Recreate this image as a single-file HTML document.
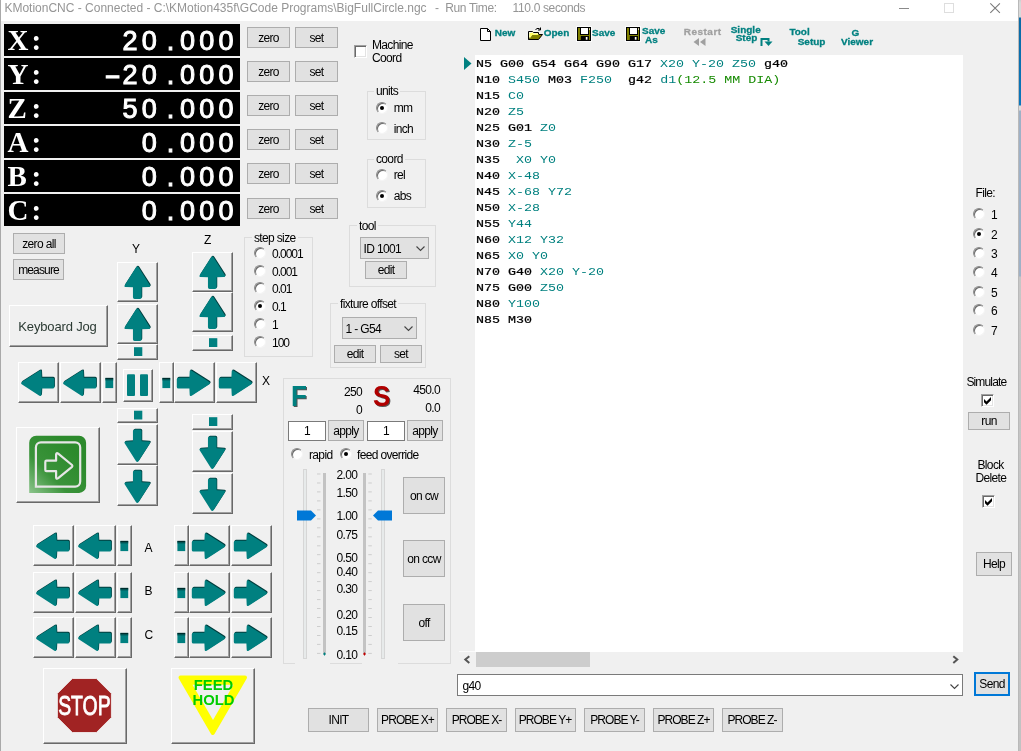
<!DOCTYPE html><html><head><meta charset="utf-8"><title>KMotionCNC</title><style>
html,body{margin:0;padding:0}
body{width:1021px;height:751px;overflow:hidden;position:relative;background:#f0f0f0;font-family:"Liberation Sans",sans-serif;font-size:12px;color:#000;letter-spacing:-0.65px}
div,span,pre{position:absolute;box-sizing:border-box;white-space:nowrap}
#ui{left:0;top:0;width:1021px;height:751px;will-change:transform}
#strip{left:1019px;top:0;width:2px;height:751px;background:linear-gradient(#cfcfcf 0,#d9d9d9 3px,#d9d9d9 17px,#0a6aa5 18px,#0b76bb 105px,#dcdcdc 106px,#dcdcdc 110px,#9fb1c6 111px,#9fb1c6 276px,#c6c6c6 277px,#c2c2c2 751px)}
#edge{left:1018px;top:0;width:1px;height:751px;background:#b9b9b9}
#ledge{left:0;top:0;width:1px;height:751px;background:#a9a9a9}
#title{left:1px;top:0;width:1017px;height:21px;background:#fff}
.tt{top:0;height:21px;line-height:17px;font-size:12px;color:#959595;letter-spacing:0}
.dro{left:4px;width:236px;height:32px;background:#000;color:#fff;letter-spacing:0}
.dro .l{left:3.5px;top:0;height:32px;line-height:33px;font-family:"Liberation Serif",serif;font-weight:bold;font-size:29px}
.dro .l b,.dro .v b{position:static;display:inline-block;width:19.2px;text-align:center;font-weight:inherit;letter-spacing:0}
.dro .v{right:2.3px;top:0;height:32px;line-height:35px;font-family:"Liberation Sans",sans-serif;font-weight:normal;-webkit-text-stroke:1px #fff;font-size:27px;letter-spacing:4.19px;transform:none}
.dro .v u{position:static;display:inline-block;text-decoration:none;transform:scaleX(1.08)}
.btn{background:#e1e1e1;border:1px solid #adadad;text-align:center;line-height:21px;height:21px}
.b3{background:#f0f0f0;border:1px solid;border-color:#fff #696969 #696969 #fff;box-shadow:inset -1px -1px 0 #a0a0a0}
.b3 svg{position:absolute;left:-1px;top:-1px}
.grp{border:1px solid #dcdcdc}
.gl{background:#f0f0f0;padding:0 2px;line-height:14px;height:14px}
.rd{width:12px;height:12px;border-radius:50%;background:#fff;border:1px solid;border-color:#8a8a8a #f4f4f4 #f4f4f4 #8a8a8a;box-shadow:inset 1px 1px 0 #6a6a6a;transform:rotate(0deg)}
.rd.on:after{content:"";position:absolute;left:3px;top:3px;width:4px;height:4px;border-radius:50%;background:#000}
.cb{width:13px;height:13px;background:#fff;border:1px solid;border-color:#a0a0a0 #fff #fff #a0a0a0;box-shadow:inset 1px 1px 0 #696969,inset -1px -1px 0 #e3e3e3}
.lb{line-height:14px;height:14px}
.combo{background:#e1e1e1;border:1px solid #adadad;padding-left:2.5px}
.edit{background:#fff;border:1px solid #7a7a7a;text-align:center;line-height:18px}
#ed{left:475px;top:55px;width:488px;height:597px;background:#fff}
#code{left:1px;top:0;margin:0;font-family:"Liberation Mono",monospace;font-size:11.5px;line-height:16px;letter-spacing:0;transform:scaleX(1.1594);transform-origin:0 0;white-space:pre;padding-top:1px}
#code b{font-weight:normal;color:#000;-webkit-text-stroke:0.22px #000}
#code i{font-style:normal;color:#00807f}
#code u{text-decoration:none;color:#158a00}
.tb{font-weight:bold;font-size:10px;color:#008080;line-height:10px;letter-spacing:0;transform:scaleY(.94);transform-origin:0 85%;-webkit-text-stroke:0.3px}
svg{position:absolute;overflow:visible}
</style></head><body><div id="ui">
<div id="title"></div><div id="ledge"></div><div id="edge"></div><div id="strip"></div>
<svg width="1021" height="21" style="left:0;top:0"><path d="M899 8.5h10" stroke="#8a8a8a" stroke-width="1" fill="none"/><rect x="944.5" y="3.5" width="9" height="9" fill="none" stroke="#dedede"/><path d="M990.3 3.3l9.6 9.6M999.9 3.3l-9.6 9.6" stroke="#7a7a7a" stroke-width="1.1" fill="none"/></svg>
<div class="dro" style="top:24px"><span class="l"><b>X</b><b>:</b></span><span class="v">20<b>.</b>000</span></div>
<div class="btn" style="left:247px;top:27px;width:43px">zero</div><div class="btn" style="left:295px;top:27px;width:43px">set</div>
<div class="dro" style="top:58px"><span class="l"><b>Y</b><b>:</b></span><span class="v"><b style="transform:scaleX(1.8)">-</b>20<b>.</b>000</span></div>
<div class="btn" style="left:247px;top:61px;width:43px">zero</div><div class="btn" style="left:295px;top:61px;width:43px">set</div>
<div class="dro" style="top:92px"><span class="l"><b>Z</b><b>:</b></span><span class="v">50<b>.</b>000</span></div>
<div class="btn" style="left:247px;top:95px;width:43px">zero</div><div class="btn" style="left:295px;top:95px;width:43px">set</div>
<div class="dro" style="top:126px"><span class="l"><b>A</b><b>:</b></span><span class="v">0<b>.</b>000</span></div>
<div class="btn" style="left:247px;top:129px;width:43px">zero</div><div class="btn" style="left:295px;top:129px;width:43px">set</div>
<div class="dro" style="top:160px"><span class="l"><b>B</b><b>:</b></span><span class="v">0<b>.</b>000</span></div>
<div class="btn" style="left:247px;top:163px;width:43px">zero</div><div class="btn" style="left:295px;top:163px;width:43px">set</div>
<div class="dro" style="top:194px"><span class="l"><b>C</b><b>:</b></span><span class="v">0<b>.</b>000</span></div>
<div class="btn" style="left:247px;top:198px;width:43px">zero</div><div class="btn" style="left:295px;top:198px;width:43px">set</div>
<div class="btn" style="left:13px;top:233px;width:52px;height:21px;line-height:21px;">zero all</div>
<div class="btn" style="left:13px;top:259px;width:51px;height:21px;line-height:21px;letter-spacing:-0.85px">measure</div>
<div class="cb" style="left:354px;top:45px"></div>
<span class="lb" style="left:372px;top:37.7px;">Machine</span>
<span class="lb" style="left:372px;top:50.7px;">Coord</span>
<div class="grp" style="left:367px;top:91px;width:59px;height:49px"></div>
<span class="gl" style="left:374px;top:83.5px">units</span>
<div class="rd on" style="left:375.7px;top:101.5px"></div>
<span class="lb" style="left:393.7px;top:101.2px;">mm</span>
<div class="rd" style="left:375.7px;top:122px"></div>
<span class="lb" style="left:393.7px;top:121.7px;">inch</span>
<div class="grp" style="left:367px;top:159px;width:59px;height:49px"></div>
<span class="gl" style="left:374px;top:151.5px">coord</span>
<div class="rd" style="left:375.7px;top:168.5px"></div>
<span class="lb" style="left:393.7px;top:168.2px;">rel</span>
<div class="rd on" style="left:375.7px;top:189.5px"></div>
<span class="lb" style="left:393.7px;top:189.2px;">abs</span>
<div class="grp" style="left:244px;top:237px;width:69px;height:120px"></div>
<span class="gl" style="left:252px;top:230.5px">step size</span>
<div class="rd" style="left:254px;top:247px"></div>
<span class="lb" style="left:272px;top:247.2px;letter-spacing:-1px">0.0001</span>
<div class="rd" style="left:254px;top:265px"></div>
<span class="lb" style="left:272px;top:265.2px;letter-spacing:-1px">0.001</span>
<div class="rd" style="left:254px;top:282px"></div>
<span class="lb" style="left:272px;top:282.2px;letter-spacing:-1px">0.01</span>
<div class="rd on" style="left:254px;top:300px"></div>
<span class="lb" style="left:272px;top:300.2px;letter-spacing:-1px">0.1</span>
<div class="rd" style="left:254px;top:318px"></div>
<span class="lb" style="left:272px;top:318.2px;letter-spacing:-1px">1</span>
<div class="rd" style="left:254px;top:336px"></div>
<span class="lb" style="left:272px;top:336.2px;letter-spacing:-1px">100</span>
<div class="grp" style="left:349px;top:225px;width:87px;height:62px"></div>
<span class="gl" style="left:357px;top:218.5px">tool</span>
<div class="combo" style="left:360px;top:237px;width:69px;height:22px;line-height:22px">ID 1001</div>
<svg width="10" height="6" style="left:416px;top:246px"><path d="M0.5 0.5l4 4l4-4" fill="none" stroke="#444" stroke-width="1.1"/></svg>
<div class="btn" style="left:365px;top:261px;width:42px;height:18px;line-height:16.8px;">edit</div>
<div class="grp" style="left:330px;top:303px;width:96px;height:65px"></div>
<span class="gl" style="left:338px;top:296.5px">fixture offset</span>
<div class="combo" style="left:342px;top:317px;width:75px;height:22px;line-height:22px">1 - G54</div>
<svg width="10" height="6" style="left:404px;top:326px"><path d="M0.5 0.5l4 4l4-4" fill="none" stroke="#444" stroke-width="1.1"/></svg>
<div class="btn" style="left:334px;top:345px;width:42px;height:18px;line-height:16.8px;">edit</div>
<div class="btn" style="left:380px;top:345px;width:42px;height:18px;line-height:16.8px;">set</div>
<svg width="0" height="0" style="left:0;top:0"><defs>
<linearGradient id="tg" x1="0" y1="0" x2="0" y2="1"><stop offset="0" stop-color="#009090"/><stop offset="0.4" stop-color="#008080"/><stop offset="1" stop-color="#007878"/></linearGradient>
<path id="arr" d="M0 -16.2 Q0.8 -16.2 1.4 -15.2 L12.5 2.2 Q13.5 4.2 11.6 4.2 L4.35 4.5 L4.35 14.6 Q4.35 16.2 2.7499999999999996 16.2 L-2.7499999999999996 16.2 Q-4.35 16.2 -4.35 14.6 L-4.35 4.5 L-11.6 4.2 Q-13.5 4.2 -12.5 2.2 L-1.4 -15.2 Q-0.8 -16.2 0 -16.2Z"/>
<path id="arh" d="M0 -16.6 Q0.8 -16.6 1.4 -15.600000000000001 L12.5 1.7000000000000002 Q13.5 3.7 11.6 3.7 L5.45 4.0 L5.45 15.000000000000002 Q5.45 16.6 3.85 16.6 L-3.85 16.6 Q-5.45 16.6 -5.45 15.000000000000002 L-5.45 4.0 L-11.6 3.7 Q-13.5 3.7 -12.5 1.7000000000000002 L-1.4 -15.600000000000001 Q-0.8 -16.6 0 -16.6Z"/>
</defs></svg>
<div class="b3" style="left:117px;top:262px;width:41px;height:40px"><svg width="41" height="40"><g transform="translate(20.9,19.849999999999998) rotate(0)"><use href="#arr" fill="#003e3e"/></g><g transform="translate(20.3,20.75) rotate(0)"><use href="#arr" fill="#008080"/></g></svg></div>
<div class="b3" style="left:117px;top:304px;width:41px;height:40px"><svg width="41" height="40"><g transform="translate(20.9,19.849999999999998) rotate(0)"><use href="#arr" fill="#003e3e"/></g><g transform="translate(20.3,20.75) rotate(0)"><use href="#arr" fill="#008080"/></g></svg></div>
<div class="b3" style="left:117px;top:344px;width:41px;height:16px"><svg width="41" height="16"><rect x="17.0" y="3.2" width="8.3" height="8.8" fill="#008080"/></svg></div>
<div class="b3" style="left:117px;top:408px;width:41px;height:15px"><svg width="41" height="15"><rect x="17.0" y="2.7" width="8.3" height="8.8" fill="#008080"/></svg></div>
<div class="b3" style="left:117px;top:424px;width:41px;height:41px"><svg width="41" height="41"><g transform="translate(20.9,20.849999999999998) rotate(180)"><use href="#arr" fill="#003e3e"/></g><g transform="translate(20.3,21.75) rotate(180)"><use href="#arr" fill="#008080"/></g></svg></div>
<div class="b3" style="left:117px;top:465px;width:41px;height:41px"><svg width="41" height="41"><g transform="translate(20.9,20.849999999999998) rotate(180)"><use href="#arr" fill="#003e3e"/></g><g transform="translate(20.3,21.75) rotate(180)"><use href="#arr" fill="#008080"/></g></svg></div>
<div class="b3" style="left:192px;top:252px;width:41px;height:40px"><svg width="41" height="40"><g transform="translate(20.9,19.849999999999998) rotate(0)"><use href="#arr" fill="#003e3e"/></g><g transform="translate(20.3,20.75) rotate(0)"><use href="#arr" fill="#008080"/></g></svg></div>
<div class="b3" style="left:192px;top:292px;width:41px;height:40px"><svg width="41" height="40"><g transform="translate(20.9,19.849999999999998) rotate(0)"><use href="#arr" fill="#003e3e"/></g><g transform="translate(20.3,20.75) rotate(0)"><use href="#arr" fill="#008080"/></g></svg></div>
<div class="b3" style="left:192px;top:335px;width:41px;height:16px"><svg width="41" height="16"><rect x="17.0" y="3.2" width="8.3" height="8.8" fill="#008080"/></svg></div>
<div class="b3" style="left:192px;top:414px;width:41px;height:16px"><svg width="41" height="16"><rect x="17.0" y="3.2" width="8.3" height="8.8" fill="#008080"/></svg></div>
<div class="b3" style="left:192px;top:431px;width:41px;height:41px"><svg width="41" height="41"><g transform="translate(20.9,20.849999999999998) rotate(180)"><use href="#arr" fill="#003e3e"/></g><g transform="translate(20.3,21.75) rotate(180)"><use href="#arr" fill="#008080"/></g></svg></div>
<div class="b3" style="left:192px;top:473px;width:41px;height:41px"><svg width="41" height="41"><g transform="translate(20.9,20.849999999999998) rotate(180)"><use href="#arr" fill="#003e3e"/></g><g transform="translate(20.3,21.75) rotate(180)"><use href="#arr" fill="#008080"/></g></svg></div>
<div class="b3" style="left:18px;top:362px;width:41px;height:41px"><svg width="41" height="41"><g transform="translate(20.299999999999997,20.25) rotate(270)"><use href="#arh" fill="#003e3e"/></g><g transform="translate(19.7,21.150000000000002) rotate(270)"><use href="#arh" fill="#008080"/></g></svg></div>
<div class="b3" style="left:60px;top:362px;width:41px;height:41px"><svg width="41" height="41"><g transform="translate(20.299999999999997,20.25) rotate(270)"><use href="#arh" fill="#003e3e"/></g><g transform="translate(19.7,21.150000000000002) rotate(270)"><use href="#arh" fill="#008080"/></g></svg></div>
<div class="b3" style="left:102px;top:362px;width:15px;height:41px"><svg width="15" height="41"><rect x="3.4" y="15.9" width="7.8" height="10.2" fill="#008080"/><rect x="3.4" y="15.9" width="7.8" height="1.2" fill="#002c2c"/><rect x="3.4" y="17.1" width="7.8" height="1.3" fill="#005050"/></svg></div>
<div class="b3" style="left:159px;top:362px;width:15px;height:41px"><svg width="15" height="41"><rect x="3.4" y="15.9" width="7.8" height="10.2" fill="#008080"/><rect x="3.4" y="15.9" width="7.8" height="1.2" fill="#002c2c"/><rect x="3.4" y="17.1" width="7.8" height="1.3" fill="#005050"/></svg></div>
<div class="b3" style="left:174px;top:362px;width:41px;height:41px"><svg width="41" height="41"><g transform="translate(20.0,20.25) rotate(90)"><use href="#arh" fill="#003e3e"/></g><g transform="translate(19.400000000000002,21.150000000000002) rotate(90)"><use href="#arh" fill="#008080"/></g></svg></div>
<div class="b3" style="left:216px;top:362px;width:41px;height:41px"><svg width="41" height="41"><g transform="translate(20.0,20.25) rotate(90)"><use href="#arh" fill="#003e3e"/></g><g transform="translate(19.400000000000002,21.150000000000002) rotate(90)"><use href="#arh" fill="#008080"/></g></svg></div>
<div class="b3" style="left:123px;top:369px;width:30px;height:33px"><svg width="30" height="33"><rect x="4" y="5.300" width="8" height="21.600" rx="1" fill="#008080"/><rect x="17" y="5.300" width="8" height="21.600" rx="1" fill="#008080"/></svg></div>
<span class="lb" style="left:262px;top:374.0px;">X</span>
<span class="lb" style="left:132px;top:242px">Y</span><span class="lb" style="left:204px;top:233px">Z</span>
<div class="b3" style="left:33px;top:525px;width:41px;height:41px"><svg width="41" height="41"><g transform="translate(20.299999999999997,20.25) rotate(270)"><use href="#arh" fill="#003e3e"/></g><g transform="translate(19.7,21.150000000000002) rotate(270)"><use href="#arh" fill="#008080"/></g></svg></div>
<div class="b3" style="left:75px;top:525px;width:41px;height:41px"><svg width="41" height="41"><g transform="translate(20.299999999999997,20.25) rotate(270)"><use href="#arh" fill="#003e3e"/></g><g transform="translate(19.7,21.150000000000002) rotate(270)"><use href="#arh" fill="#008080"/></g></svg></div>
<div class="b3" style="left:117px;top:525px;width:15px;height:41px"><svg width="15" height="41"><rect x="3.4" y="15.9" width="7.8" height="10.2" fill="#008080"/><rect x="3.4" y="15.9" width="7.8" height="1.2" fill="#002c2c"/><rect x="3.4" y="17.1" width="7.8" height="1.3" fill="#005050"/></svg></div>
<div class="b3" style="left:174px;top:525px;width:15px;height:41px"><svg width="15" height="41"><rect x="3.4" y="15.9" width="7.8" height="10.2" fill="#008080"/><rect x="3.4" y="15.9" width="7.8" height="1.2" fill="#002c2c"/><rect x="3.4" y="17.1" width="7.8" height="1.3" fill="#005050"/></svg></div>
<div class="b3" style="left:189px;top:525px;width:41px;height:41px"><svg width="41" height="41"><g transform="translate(20.0,20.25) rotate(90)"><use href="#arh" fill="#003e3e"/></g><g transform="translate(19.400000000000002,21.150000000000002) rotate(90)"><use href="#arh" fill="#008080"/></g></svg></div>
<div class="b3" style="left:231px;top:525px;width:41px;height:41px"><svg width="41" height="41"><g transform="translate(20.0,20.25) rotate(90)"><use href="#arh" fill="#003e3e"/></g><g transform="translate(19.400000000000002,21.150000000000002) rotate(90)"><use href="#arh" fill="#008080"/></g></svg></div>
<span class="lb" style="left:144.5px;top:541px">A</span>
<div class="b3" style="left:33px;top:572px;width:41px;height:41px"><svg width="41" height="41"><g transform="translate(20.299999999999997,20.25) rotate(270)"><use href="#arh" fill="#003e3e"/></g><g transform="translate(19.7,21.150000000000002) rotate(270)"><use href="#arh" fill="#008080"/></g></svg></div>
<div class="b3" style="left:75px;top:572px;width:41px;height:41px"><svg width="41" height="41"><g transform="translate(20.299999999999997,20.25) rotate(270)"><use href="#arh" fill="#003e3e"/></g><g transform="translate(19.7,21.150000000000002) rotate(270)"><use href="#arh" fill="#008080"/></g></svg></div>
<div class="b3" style="left:117px;top:572px;width:15px;height:41px"><svg width="15" height="41"><rect x="3.4" y="15.9" width="7.8" height="10.2" fill="#008080"/><rect x="3.4" y="15.9" width="7.8" height="1.2" fill="#002c2c"/><rect x="3.4" y="17.1" width="7.8" height="1.3" fill="#005050"/></svg></div>
<div class="b3" style="left:174px;top:572px;width:15px;height:41px"><svg width="15" height="41"><rect x="3.4" y="15.9" width="7.8" height="10.2" fill="#008080"/><rect x="3.4" y="15.9" width="7.8" height="1.2" fill="#002c2c"/><rect x="3.4" y="17.1" width="7.8" height="1.3" fill="#005050"/></svg></div>
<div class="b3" style="left:189px;top:572px;width:41px;height:41px"><svg width="41" height="41"><g transform="translate(20.0,20.25) rotate(90)"><use href="#arh" fill="#003e3e"/></g><g transform="translate(19.400000000000002,21.150000000000002) rotate(90)"><use href="#arh" fill="#008080"/></g></svg></div>
<div class="b3" style="left:231px;top:572px;width:41px;height:41px"><svg width="41" height="41"><g transform="translate(20.0,20.25) rotate(90)"><use href="#arh" fill="#003e3e"/></g><g transform="translate(19.400000000000002,21.150000000000002) rotate(90)"><use href="#arh" fill="#008080"/></g></svg></div>
<span class="lb" style="left:144.5px;top:584px">B</span>
<div class="b3" style="left:33px;top:617px;width:41px;height:41px"><svg width="41" height="41"><g transform="translate(20.299999999999997,20.25) rotate(270)"><use href="#arh" fill="#003e3e"/></g><g transform="translate(19.7,21.150000000000002) rotate(270)"><use href="#arh" fill="#008080"/></g></svg></div>
<div class="b3" style="left:75px;top:617px;width:41px;height:41px"><svg width="41" height="41"><g transform="translate(20.299999999999997,20.25) rotate(270)"><use href="#arh" fill="#003e3e"/></g><g transform="translate(19.7,21.150000000000002) rotate(270)"><use href="#arh" fill="#008080"/></g></svg></div>
<div class="b3" style="left:117px;top:617px;width:15px;height:41px"><svg width="15" height="41"><rect x="3.4" y="15.9" width="7.8" height="10.2" fill="#008080"/><rect x="3.4" y="15.9" width="7.8" height="1.2" fill="#002c2c"/><rect x="3.4" y="17.1" width="7.8" height="1.3" fill="#005050"/></svg></div>
<div class="b3" style="left:174px;top:617px;width:15px;height:41px"><svg width="15" height="41"><rect x="3.4" y="15.9" width="7.8" height="10.2" fill="#008080"/><rect x="3.4" y="15.9" width="7.8" height="1.2" fill="#002c2c"/><rect x="3.4" y="17.1" width="7.8" height="1.3" fill="#005050"/></svg></div>
<div class="b3" style="left:189px;top:617px;width:41px;height:41px"><svg width="41" height="41"><g transform="translate(20.0,20.25) rotate(90)"><use href="#arh" fill="#003e3e"/></g><g transform="translate(19.400000000000002,21.150000000000002) rotate(90)"><use href="#arh" fill="#008080"/></g></svg></div>
<div class="b3" style="left:231px;top:617px;width:41px;height:41px"><svg width="41" height="41"><g transform="translate(20.0,20.25) rotate(90)"><use href="#arh" fill="#003e3e"/></g><g transform="translate(19.400000000000002,21.150000000000002) rotate(90)"><use href="#arh" fill="#008080"/></g></svg></div>
<span class="lb" style="left:144.5px;top:628px">C</span>
<div class="b3" style="left:9px;top:305px;width:99px;height:42px"><span style="left:-1px;top:0;width:97px;height:40px;line-height:41px;text-align:center;font-size:13px;letter-spacing:-0.15px;color:#2b3a33">Keyboard Jog</span></div>
<div class="b3" style="left:16px;top:427px;width:84px;height:76px"><svg width="84" height="76"><defs><linearGradient id="gg" x1="0" y1="1" x2="0.75" y2="0.25"><stop offset="0" stop-color="#8cc48c"/><stop offset="0.45" stop-color="#3a933a"/><stop offset="1" stop-color="#2c8a2c"/></linearGradient></defs>
<path d="M20.200 8.700h42.900a7 7 0 0 1 7 7v43.200a7 7 0 0 1 -7 7h-49.900v-50.200a7 7 0 0 1 7-7z" fill="url(#gg)"/>
<path d="M24.900 15.400H59.200a5 5 0 0 1 5 5V54.600a5 5 0 0 1 -5 5H19.900V20.400a5 5 0 0 1 5-5z" fill="none" stroke="#e6e6e6" stroke-width="2.200"/>
<path d="M30.500 33.700H40.100V27.500Q40.300 25.300 42.200 26.600L56 38Q56.800 38.900 56 39.800L42.200 51.200Q40.300 52.500 40.100 50.300V44.100H30.500Q29.300 44.100 29.300 42.900V34.900Q29.300 33.700 30.500 33.700Z" fill="none" stroke="#e6e6e6" stroke-width="2.200" stroke-linejoin="round"/></svg></div>
<div class="b3" style="left:43px;top:668px;width:84px;height:76px"><svg width="84" height="76"><polygon points="29.400,10.500 53.400,10.500 68.400,25.500 68.400,49.500 53.400,64.500 29.400,64.500 14.400,49.500 14.400,25.500" fill="#a12323" stroke="#f6f6f6" stroke-width="0.800"/>
<text x="41.400" y="46.900" text-anchor="middle" font-family="Liberation Sans,sans-serif" font-weight="normal" font-size="28.500" fill="#fff" stroke="#fff" stroke-width="0.9" letter-spacing="0" transform="translate(41.400 0) scale(0.680 1) translate(-41.400 0)">STOP</text></svg></div>
<div class="b3" style="left:171px;top:668px;width:84px;height:76px"><svg width="84" height="76"><path d="M9.500 9.500h64.500l-32.250 55.500z" fill="#ffff00" stroke="#ffff00" stroke-width="4" stroke-linejoin="round"/><path d="M21.500 16.700h41l-20.500 35.300z" fill="#f0f0f0"/>
<text x="42.500" y="21.800" text-anchor="middle" font-family="Liberation Sans,sans-serif" font-weight="bold" font-size="14.800" fill="#00cc00" letter-spacing="0">FEED</text><text x="42.500" y="36.800" text-anchor="middle" font-family="Liberation Sans,sans-serif" font-weight="bold" font-size="14.800" fill="#00cc00" letter-spacing="0">HOLD</text></svg></div>
<div class="grp" style="left:283px;top:378px;width:168px;height:286px"></div>
<span style="left:291px;top:380px;font-size:29px;font-weight:bold;line-height:32px;color:#008080;letter-spacing:0;text-shadow:1px 1px 0 #555;transform:scaleX(.9);transform-origin:0 0">F</span>
<span style="left:373px;top:380px;font-size:29px;font-weight:bold;line-height:32px;color:#b00000;letter-spacing:0;text-shadow:1px 1px 0 #555;transform:scaleX(.9);transform-origin:0 0">S</span>
<span class="lb" style="right:659px;top:385px">250</span><span class="lb" style="right:659px;top:403px">0</span>
<span class="lb" style="right:581px;top:383px">450.0</span><span class="lb" style="right:581px;top:401px">0.0</span>
<div class="edit" style="left:288px;top:421px;width:38px;height:20px">1</div>
<div class="btn" style="left:328px;top:420px;width:36px;height:21px;line-height:21px;">apply</div>
<div class="edit" style="left:367px;top:421px;width:38px;height:20px">1</div>
<div class="btn" style="left:407px;top:420px;width:36px;height:21px;line-height:21px;">apply</div>
<div class="rd" style="left:291px;top:448px"></div>
<span class="lb" style="left:309px;top:447.7px;">rapid</span>
<div class="rd on" style="left:340px;top:448px"></div>
<span class="lb" style="left:357px;top:447.7px;">feed override</span>
<div style="left:295px;top:466px;width:35px;height:199px;background:#f0f0f0"></div><div style="left:362px;top:466px;width:36px;height:199px;background:#f0f0f0"></div>
<div style="left:303px;top:469px;width:4px;height:190px;background:#e7eaea;border:1px solid #d6d6d6"></div>
<div style="left:381px;top:469px;width:4px;height:190px;background:#e7eaea;border:1px solid #d6d6d6"></div>
<div style="left:323px;top:473px;width:2.500px;height:181px;background:#c3c3c3"></div><div style="left:363px;top:473px;width:2.500px;height:181px;background:#c3c3c3"></div>
<svg width="1021" height="751" style="left:0;top:0" stroke="#cdcdcd" stroke-width="1" fill="none"><path d="M317 474.0h3.500M368.300 474.0h3.500"/><path d="M317 483.0h3.500M368.300 483.0h3.500"/><path d="M317 491.9h3.500M368.300 491.9h3.500"/><path d="M317 500.9h3.500M368.300 500.9h3.500"/><path d="M317 509.9h3.500M368.300 509.9h3.500"/><path d="M317 518.9h3.500M368.300 518.9h3.500"/><path d="M317 527.8h3.500M368.300 527.8h3.500"/><path d="M317 536.8h3.500M368.300 536.8h3.500"/><path d="M317 545.8h3.500M368.300 545.8h3.500"/><path d="M317 554.7h3.500M368.300 554.7h3.500"/><path d="M317 563.7h3.500M368.300 563.7h3.500"/><path d="M317 572.7h3.500M368.300 572.7h3.500"/><path d="M317 581.6h3.500M368.300 581.6h3.500"/><path d="M317 590.6h3.500M368.300 590.6h3.500"/><path d="M317 599.6h3.500M368.300 599.6h3.500"/><path d="M317 608.5h3.500M368.300 608.5h3.500"/><path d="M317 617.5h3.500M368.300 617.5h3.500"/><path d="M317 626.5h3.500M368.300 626.5h3.500"/><path d="M317 635.5h3.500M368.300 635.5h3.500"/><path d="M317 644.4h3.500M368.300 644.4h3.500"/><path d="M317 653.4h3.500M368.300 653.4h3.500"/><path d="M323 654h3M324.500 652.500v3" stroke="#008080"/><path d="M363 654h3M364.500 652.500v3" stroke="#c00000"/></svg>
<span class="lb" style="left:336.500px;top:467.5px">2.00</span>
<span class="lb" style="left:336.500px;top:486.0px">1.50</span>
<span class="lb" style="left:336.500px;top:509.0px">1.00</span>
<span class="lb" style="left:336.500px;top:527.6px">0.75</span>
<span class="lb" style="left:336.500px;top:550.5px">0.50</span>
<span class="lb" style="left:336.500px;top:564.8px">0.40</span>
<span class="lb" style="left:336.500px;top:582.4px">0.30</span>
<span class="lb" style="left:336.500px;top:607.6px">0.20</span>
<span class="lb" style="left:336.500px;top:623.5px">0.15</span>
<span class="lb" style="left:336.500px;top:648.0px">0.10</span>
<svg width="1021" height="751" style="left:0;top:0"><path d="M297 510.500h14l5 5l-5 5h-14z" fill="#0078d7"/><path d="M392 510.500h-14l-5 5l5 5h14z" fill="#0078d7"/></svg>
<div class="btn" style="left:403px;top:477px;width:42px;height:37px;line-height:37px;">on cw</div>
<div class="btn" style="left:403px;top:540px;width:42px;height:37px;line-height:37px;">on ccw</div>
<div class="btn" style="left:403px;top:604px;width:42px;height:37px;line-height:37px;">off</div>
<div class="btn" style="left:308px;top:708px;width:61px;height:24px;line-height:22px;">INIT</div>
<div class="btn" style="left:377px;top:708px;width:61px;height:24px;line-height:22px;letter-spacing:-0.95px">PROBE X+</div>
<div class="btn" style="left:446px;top:708px;width:61px;height:24px;line-height:22px;letter-spacing:-0.95px">PROBE X-</div>
<div class="btn" style="left:514.5px;top:708px;width:61px;height:24px;line-height:22px;letter-spacing:-0.95px">PROBE Y+</div>
<div class="btn" style="left:584px;top:708px;width:61px;height:24px;line-height:22px;letter-spacing:-0.95px">PROBE Y-</div>
<div class="btn" style="left:653px;top:708px;width:61px;height:24px;line-height:22px;letter-spacing:-0.95px">PROBE Z+</div>
<div class="btn" style="left:721.5px;top:708px;width:61px;height:24px;line-height:22px;letter-spacing:-0.95px">PROBE Z-</div>
<div style="left:457px;top:674px;width:506px;height:22px;background:#fff;border:1px solid #7a7a7a;line-height:22px;padding-left:4.5px">g40</div>
<svg width="10" height="6" style="left:949.500px;top:683.500px"><path d="M0.500 0.500l4 4l4-4" fill="none" stroke="#444" stroke-width="1.100"/></svg>
<div style="left:974px;top:672px;width:36px;height:24px;background:#e1e1e1;border:2px solid #0078d7;text-align:center;line-height:20px">Send</div>
<svg width="8" height="14" style="left:464px;top:57px"><path d="M0 0l7.500 6.500l-7.500 6.500z" fill="#008080"/></svg>
<div style="left:457px;top:652px;width:506px;height:16px;background:#f0f0f0"></div><div style="left:459px;top:651px;width:16px;height:1px;background:#fbfbfb"></div><div style="left:475.500px;top:652px;width:114.500px;height:15px;background:#cdcdcd"></div>
<svg width="1021" height="751" style="left:0;top:0" fill="none" stroke="#555" stroke-width="2"><path d="M469.300 656.200l-4 3.400l4 3.400"/><path d="M953.300 656.200l4 3.400l-4 3.400"/></svg>
<svg width="1021" height="55" style="left:0;top:0">
<path d="M480.500 28.500h7l3 3v9h-10z" fill="#fff" stroke="#000"/><path d="M487.500 28.500v3h3" fill="none" stroke="#000"/>
<g><path d="M528.500 31.500h4l1 1h5v2" fill="#ffff99" stroke="#000"/><path d="M528.500 31.500v8h10l4-5h-10l-4 5" fill="#808000" stroke="#000" stroke-linejoin="round"/><path d="M529.500 33h3.500l1 1h4.500v1h-6l-3 4z" fill="#ffff66"/><path d="M535.500 29.500q2.500-2.500 5 0M540.500 27.500v2.500h-2.500" fill="none" stroke="#000"/></g>
<g id="flp"><rect x="576.500" y="26.500" width="15" height="15" fill="none" stroke="#fff" stroke-opacity=".8"/><rect x="577.500" y="27.500" width="13" height="13" fill="#808000" stroke="#000"/><rect x="580.500" y="27.500" width="8" height="7" fill="#fff" stroke="#000"/><rect x="580.800" y="36" width="8.200" height="4.500" fill="#000"/><rect x="585.800" y="37" width="1.700" height="2.700" fill="#fff"/><rect x="589" y="28.500" width="1" height="1.200" fill="#fff"/></g>
<use href="#flp" x="49"/>
<path d="M699 38l-5.500 4l5.500 4zM705.500 38l-5.500 4l5.500 4z" fill="#a0a0a0"/>
<path d="M761.500 46v-7h7v2.500" fill="none" stroke="#008080" stroke-width="2"/><path d="M764.500 41.500h8l-4 4.500z" fill="#008080"/>
</svg>
<span class="tb" style="left:494.7px;top:27.9px;">New</span>
<span class="tb" style="left:543.7px;top:27.9px;">Open</span>
<span class="tb" style="left:592px;top:28.4px;">Save</span>
<span class="tb" style="left:642px;top:25.6px;">Save</span>
<span class="tb" style="left:645px;top:34.6px;">As</span>
<span class="tb" style="left:683.7px;top:26.7px;color:#a0a0a0;letter-spacing:.5px;">Restart</span>
<span class="tb" style="left:730.7px;top:24.6px;">Single</span>
<span class="tb" style="left:735.7px;top:32.7px;">Step</span>
<span class="tb" style="left:789.4px;top:27.0px;">Tool</span>
<span class="tb" style="left:797.7px;top:37.1px;">Setup</span>
<span class="tb" style="left:851.5px;top:28.1px;">G</span>
<span class="tb" style="left:841px;top:37.1px;">Viewer</span>
<span class="lb" style="left:975.5px;top:185.7px;">File:</span>
<div class="rd" style="left:972.5px;top:208px"></div>
<span class="lb" style="left:991px;top:208.2px;">1</span>
<div class="rd on" style="left:972.5px;top:228px"></div>
<span class="lb" style="left:991px;top:228.2px;">2</span>
<div class="rd" style="left:972.5px;top:247px"></div>
<span class="lb" style="left:991px;top:247.2px;">3</span>
<div class="rd" style="left:972.5px;top:266px"></div>
<span class="lb" style="left:991px;top:266.2px;">4</span>
<div class="rd" style="left:972.5px;top:286px"></div>
<span class="lb" style="left:991px;top:286.2px;">5</span>
<div class="rd" style="left:972.5px;top:304px"></div>
<span class="lb" style="left:991px;top:304.2px;">6</span>
<div class="rd" style="left:972.5px;top:324px"></div>
<span class="lb" style="left:991px;top:324.2px;">7</span>
<span class="lb" style="left:966.4px;top:375.2px;letter-spacing:-0.85px">Simulate</span>
<div class="cb" style="left:981px;top:393.5px"><svg width="11" height="11" style="left:0;top:0"><path d="M2 4v3.200l2.500 2.500l4.500-4.500v-3.200l-4.500 4.500z" fill="#000"/></svg></div>
<div class="btn" style="left:968px;top:412px;width:42px;height:18px;line-height:16.8px;">run</div>
<span class="lb" style="left:977.5px;top:457.7px;">Block</span>
<span class="lb" style="left:975.4px;top:470.7px;">Delete</span>
<div class="cb" style="left:982px;top:495px"><svg width="11" height="11" style="left:0;top:0"><path d="M2 4v3.200l2.500 2.500l4.500-4.500v-3.200l-4.500 4.500z" fill="#000"/></svg></div>
<div class="btn" style="left:976px;top:552px;width:36px;height:24px;line-height:22px;">Help</div>
</div>
<span class="tt" id="tt0" style="left:4.4px">KMotionCNC - Connected - C:\KMotion435f\GCode Programs\BigFullCircle.ngc</span>
<span class="tt" id="tt1" style="left:435px">-</span>
<span class="tt" id="tt2" style="left:445.2px;letter-spacing:-0.35px">Run Time:</span>
<span class="tt" id="tt3" style="left:512.6px;letter-spacing:-0.35px">110.0 seconds</span>
<div id="ed"><pre id="code"><b>N5 G00 G54 G64 G90 G17</b> <i>X20 Y-20 Z50</i> <b>g40</b>
<b>N10</b> <i>S450</i> <b>M03</b> <i>F250</i>  <b>g42</b> <i>d1</i><u>(12.5 MM DIA)</u>
<b>N15</b> <i>C0</i>
<b>N20</b> <i>Z5</i>
<b>N25 G01</b> <i>Z0</i>
<b>N30</b> <i>Z-5</i>
<b>N35</b>  <i>X0 Y0</i>
<b>N40</b> <i>X-48</i>
<b>N45</b> <i>X-68 Y72</i>
<b>N50</b> <i>X-28</i>
<b>N55</b> <i>Y44</i>
<b>N60</b> <i>X12 Y32</i>
<b>N65</b> <i>X0 Y0</i>
<b>N70 G40</b> <i>X20 Y-20</i>
<b>N75 G00</b> <i>Z50</i>
<b>N80</b> <i>Y100</i>
<b>N85 M30</b>
</pre></div>
</body></html>
